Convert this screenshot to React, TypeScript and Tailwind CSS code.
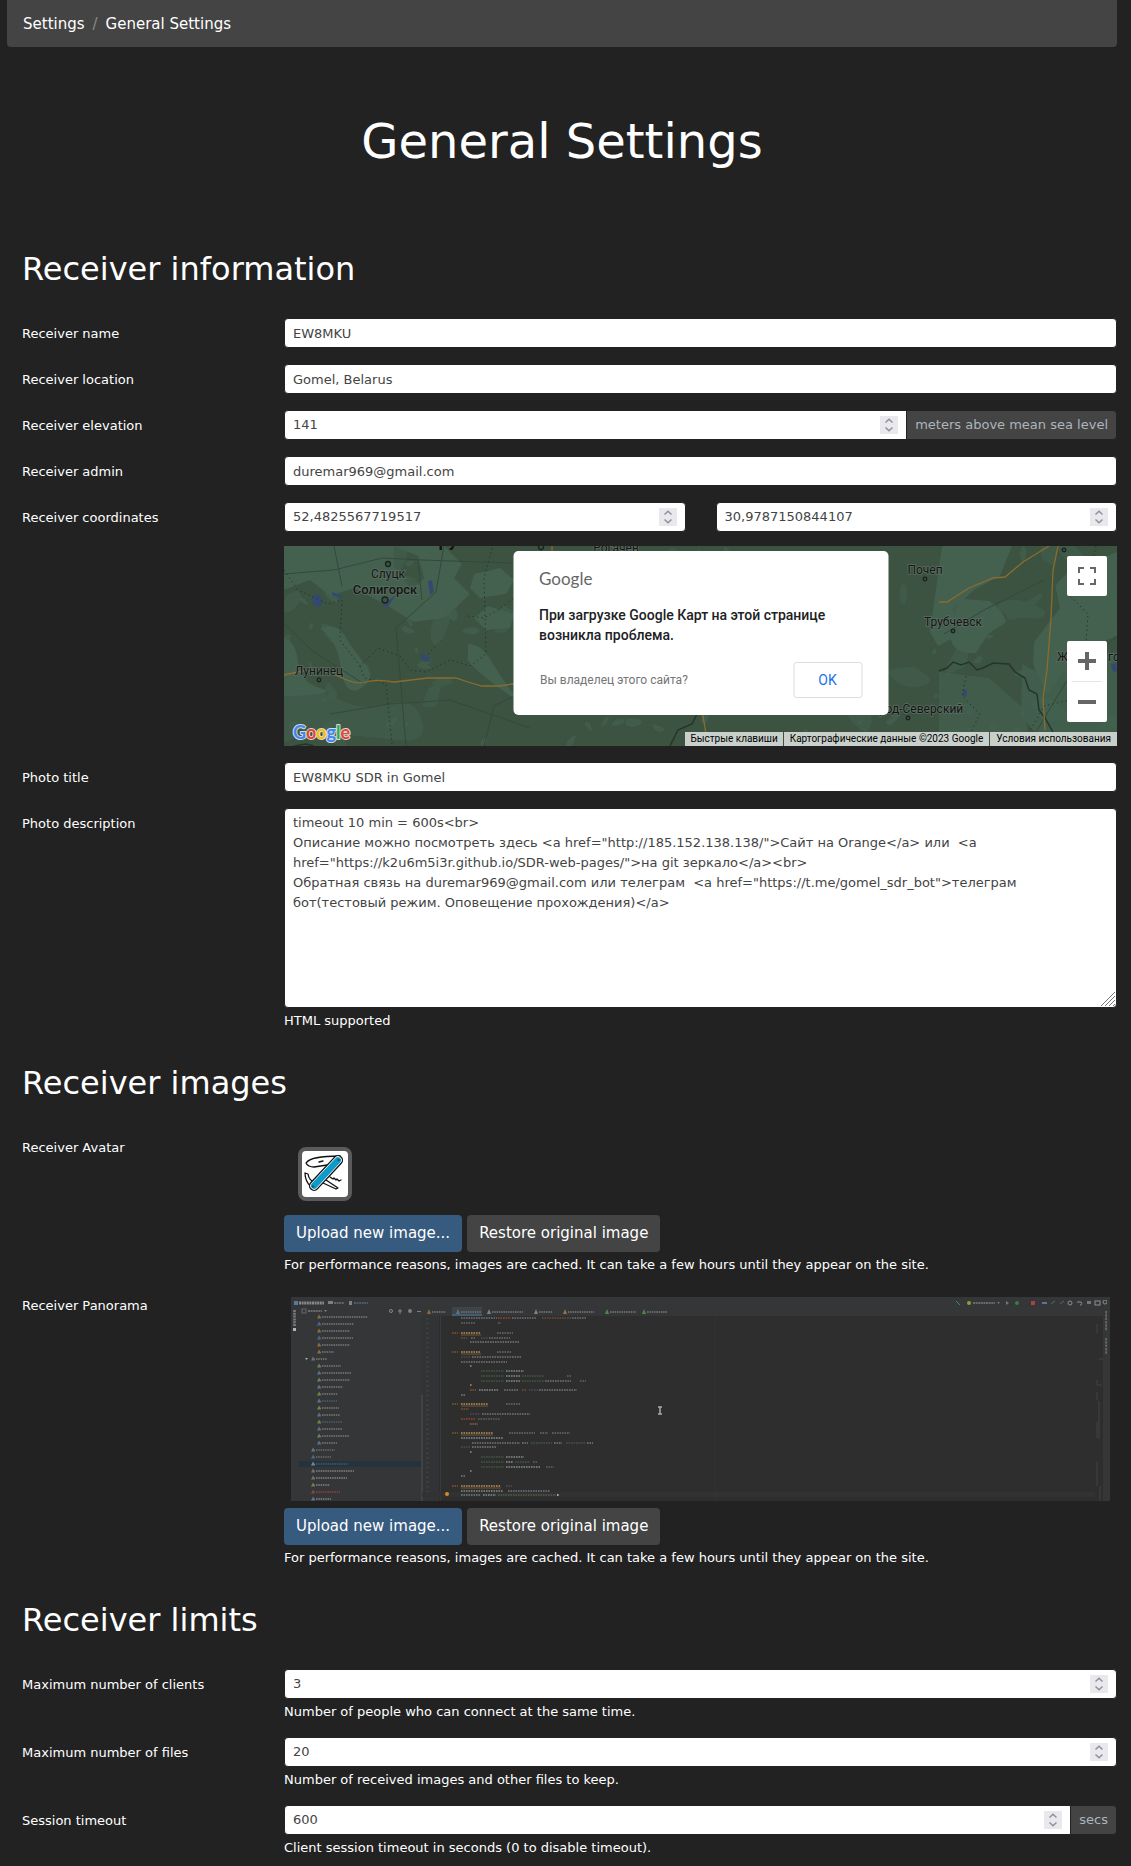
import React from "react";

function seeded(seed: number) {
  let s = seed;
  return () => {
    s = (s * 16807) % 2147483647;
    return s / 2147483647;
  };
}

function blobs(seed: number, count: number, min: number, max: number) {
  const r = seeded(seed);
  return Array.from({ length: count }, () => {
    const cx = r() * 833;
    const cy = r() * 200;
    const size = min + r() * (max - min);
    const tilt = r() * Math.PI;
    const points = Array.from({ length: 9 }, (_, i) => {
      const a = (i / 9) * Math.PI * 2;
      const px = Math.cos(a) * size * (0.6 + r() * 0.7);
      const py = Math.sin(a) * size * (0.25 + r() * 0.4);
      return [
        cx + px * Math.cos(tilt) - py * Math.sin(tilt),
        cy + px * Math.sin(tilt) + py * Math.cos(tilt),
      ];
    });
    const mid = (a: number[], b: number[]) => `${(a[0] + b[0]) / 2} ${(a[1] + b[1]) / 2}`;
    return (
      `M${mid(points[8], points[0])}` +
      points.map((p, i) => `Q${p[0]} ${p[1]} ${mid(p, points[(i + 1) % 9])}`).join("") +
      "Z"
    );
  }).join("");
}

const smallFields = blobs(77, 105, 3, 10);
const fields = blobs(19, 42, 9, 22);

function Label({ htmlFor, children }: { htmlFor?: string; children: React.ReactNode }) {
  return (
    <label htmlFor={htmlFor} className="pt-[6px] text-[13px] leading-5">
      {children}
    </label>
  );
}

function Row({ id, label, children }: { id: string; label: string; children: React.ReactNode }) {
  return (
    <div className="mb-4 grid grid-cols-[262px_minmax(0,1fr)]">
      <Label htmlFor={id}>{label}</Label>
      <div className="min-w-0">{children}</div>
    </div>
  );
}

function Help({ children }: { children: React.ReactNode }) {
  return <p className="mt-1 text-[13px] leading-[18px]">{children}</p>;
}

function TextField({ id, value }: { id: string; value: string }) {
  return (
    <input
      id={id}
      type="text"
      defaultValue={value}
      className="block h-[30px] w-full rounded-[4px] border border-[#222] bg-white px-2 text-[13px] text-[#444] outline-none"
    />
  );
}

function NumberField({ id, value, unit, label }: { id: string; value: string; unit?: string; label?: string }) {
  return (
    <div className="flex h-[30px]">
      <div
        className={
          unit
            ? "flex min-w-0 flex-1 items-center rounded-l-[4px] border border-[#222] bg-white pr-2"
            : "flex min-w-0 flex-1 items-center rounded-[4px] border border-[#222] bg-white pr-2"
        }
      >
        <input
          id={id}
          type="text"
          inputMode="decimal"
          aria-label={label}
          defaultValue={value}
          className="min-w-0 flex-1 bg-transparent px-2 text-[13px] text-[#444] outline-none"
        />
        <svg viewBox="0 0 18 18" className="h-[18px] w-[18px] shrink-0 bg-[#e9e9ed]" aria-hidden="true">
          <path d="M5.5 6.500 9 3.300l3.500 3.200M5.500 11.500 9 14.700l3.500-3.200" fill="none" stroke="#8f8f9d" strokeWidth="1.500" />
        </svg>
      </div>
      {unit && (
        <span className="-ml-px flex items-center rounded-r-[4px] border border-[#222] bg-[#444] px-2 text-[13px] text-[#adb5bd]">
          {unit}
        </span>
      )}
    </div>
  );
}

function GoogleColor() {
  return (
    <svg viewBox="0 0 66 24" className="absolute bottom-0 left-2 h-6 w-[66px]" role="img" aria-label="Google">
      <text
        x="1"
        y="17"
        fontFamily="Lato, sans-serif"
        fontSize="18"
        fontWeight="700"
        stroke="#d5dcd7"
        strokeWidth="2"
        strokeLinejoin="round"
        paintOrder="stroke"
      >
        <tspan fill="#4285f4">G</tspan>
        <tspan fill="#ea4335">o</tspan>
        <tspan fill="#fbbc04">o</tspan>
        <tspan fill="#4285f4">g</tspan>
        <tspan fill="#34a853">l</tspan>
        <tspan fill="#ea4335">e</tspan>
      </text>
    </svg>
  );
}

function MapDrawing() {
  return (
    <svg viewBox="0 0 833 200" preserveAspectRatio="xMidYMid slice" className="block h-full w-full" aria-label="Map">
      <rect width="833" height="200" fill="#3b5340" />
      <g fill="#446150">
        <path d="M0 0H160L178 18 170 32 186 48 160 72 130 76 104 60 70 42 46 50 26 34 0 44Z" />
        <path d="M35 82q18-6 26 8t20 28-4 24-20-20-22-40Z" />
        <path d="M0 92q12 4 14 24T36 142 12 150 0 134Z" />
        <path d="M0 150q26-12 52 2t52 6 34 16-26 20-62-6-50 8Z" opacity=".55" />
        <path d="M184 98q14 0 24 18t22 32-20-10-26-28Z" />
        <path d="M190 28l26-6 14 12-8 14-26 4-10-10ZM204 60l26 8-4 14-24 2-12-12Z" />
        <path d="M658 0h70l-12 30-26 14-22 20 12 22-26 14-8-14Z" />
        <path d="M705 55q18 10 18 30t-30 22-26-24 14-30Z" />
        <path d="M752 60l32-34 49-20v84l-36 14-34 44-14-30Z" />
        <path d="M655 126l50 6 34 30 8 38H655Z" opacity=".7" />
        <path d="M738 118q20 14 44 4t51-16v94h-70l-26-30Z" opacity=".75" />
      </g>
      <g fill="#3b5340">
        <path d="M742 10l26 14 8 38-26 34-42 22-28 8 24-38 28-18 2-26Z" />
        <path d="M0 52l20 6 20 18-10 20-30-6ZM110 0l24 10 6 22-12 12-18-24Z" />
      </g>
      <g fill="#446150">
        <path d={fields} opacity=".5" />
        <path d={smallFields} opacity=".7" />
      </g>
      <g fill="#34496f">
        <path d="M28 50l7-2 4 8-4 5-6-3ZM136 108l6 1 6 7-7-1-5-4ZM144 35l4-1 2 12-4 3ZM100 58l12-9-8 12h-5ZM48 46l12 4-3 2-9-3Z" />
        <path d="M827 118l5-1 1 8-4 1ZM679 143l4 1-1 7-3-1Z" />
      </g>
      <g fill="none" stroke="#34493b" strokeWidth="1">
        <path d="M0 28l50-4 48-12 40 2 90 3M50 0l8 40M134 14l4 40M160 0l-8 46-40 36 10 118M0 78l30 28 50 32M46 168l60-10 60-4 80 28M200 200l10-40 40-20M660 88l40-24 60-30" />
        <path d="M752 186l30-50 51-46" />
      </g>
      <g fill="none" stroke="#26372c" strokeWidth="1" strokeDasharray="1.500 3">
        <path d="M0 24l14 20 30 14 14-4-2 40 20 26 18-18 22 8 10 14 16 2 24-12 20 6 16-12-2-76 10-36M76 120l4 12 22 6 6 60M184 70l16 2 14-8 16-12M144 108l14-14" />
        <path d="M812 0l-6 26-20 24 18 18-2 28-12 24-4 34-26 6-16 28M682 130l-4 20 18 18-10 20" />
      </g>
      <path
        d="M655 125l8-3 6-6 8 3 8-3 8 8 6-2 10-5 16 1 6 8 10 6 4 12 8 4 2 16 6 8 8 14M10 200l12-2 8 2M386 200l8-16 14-6 6-12"
        fill="none"
        stroke="#26352c"
        strokeWidth="1.500"
      />
      <g fill="none" stroke="#8c6c2e" strokeWidth="1.300">
        <path d="M0 129l18-4q22-2 38 6t26 5 28 0l34-4h28l12 4 14 4h18l12-2h30" />
        <path d="M268 0v8M418 164l6 36M655 56h8l22-14 24-10 12-1 18-15 26-16M774 0l-5 24-2 48-4 52-4 28 2 32" />
      </g>
      <g fill="#3b5340" stroke="#1b211d" strokeWidth="1.300">
        <circle cx="104" cy="18" r="2.500" />
        <circle cx="101" cy="54" r="3" />
        <circle cx="35" cy="134" r="1.800" />
        <circle cx="257" cy="1" r="2.500" />
        <circle cx="641" cy="33" r="1.800" />
        <circle cx="669" cy="85" r="1.800" />
        <circle cx="624" cy="172" r="1.800" />
        <circle cx="780" cy="4" r="1.800" />
      </g>
      <g
        fontFamily="Roboto, sans-serif"
        fontSize="12"
        fill="#121512"
        stroke="#5d6e63"
        strokeWidth="1.500"
        paintOrder="stroke"
        textAnchor="middle"
      >
        <text x="104" y="32">Слуцк</text>
        <text x="101" y="48" fontWeight="500" fontSize="13">Солигорск</text>
        <text x="35" y="129">Лунинец</text>
        <text x="332" y="6">Рогачев</text>
        <text x="164" y="0" fontWeight="700" fontSize="18" stroke="none">ру</text>
        <text x="641" y="28">Почеп</text>
        <text x="669" y="80">Трубчевск</text>
        <text x="620" y="167">Новгород-Северский</text>
        <text x="773" y="115" textAnchor="start">Ж</text>
        <text x="824" y="115" textAnchor="start">го</text>
      </g>
    </svg>
  );
}

function ReceiverMap() {
  return (
    <div className="relative mt-[14px] h-[200px] overflow-hidden font-[Roboto,sans-serif]">
      <MapDrawing />
      <GoogleColor />
      <div className="absolute right-0 bottom-0 flex h-[14px] text-[10px] leading-[14px] text-black">
        <button type="button" className="bg-[#c9d0cb] px-[5px]">Быстрые клавиши</button>
        <span className="border-l border-[#3b5340] bg-[#c9d0cb] px-[6px]">Картографические данные ©2023 Google</span>
        <a href="#terms" className="border-l border-[#3b5340] bg-[#c9d0cb] px-[6px]">Условия использования</a>
      </div>
      <button
        type="button"
        aria-label="Fullscreen"
        className="absolute top-[10px] right-[10px] flex h-10 w-10 items-center justify-center rounded-[2px] bg-white"
      >
        <svg viewBox="0 0 18 18" className="h-[18px] w-[18px]" fill="#666">
          <path d="M0 0v6h2V2h4V0H0zm16 0h-4v2h4v4h2V0h-2zm0 16h-4v2h6v-6h-2v4zM2 12H0v6h6v-2H2v-4z" />
        </svg>
      </button>
      <div className="absolute right-[10px] bottom-6 flex w-10 flex-col items-center rounded-[2px] bg-white">
        <button type="button" aria-label="Zoom in" className="flex h-10 w-10 items-center justify-center">
          <svg viewBox="0 0 18 18" className="h-[18px] w-[18px]" fill="#666">
            <path d="M18 7h-7V0H7v7H0v4h7v7h4v-7h7z" />
          </svg>
        </button>
        <div className="h-px w-[30px] bg-[#e6e6e6]" />
        <button type="button" aria-label="Zoom out" className="flex h-10 w-10 items-center justify-center">
          <svg viewBox="0 0 18 18" className="h-[18px] w-[18px]" fill="#666">
            <path d="M0 7h18v4H0z" />
          </svg>
        </button>
      </div>
      <div
        role="dialog"
        aria-label="Google"
        className="absolute top-[5px] left-1/2 h-[164px] w-[375px] -translate-x-1/2 rounded-[5px] bg-white px-[26px] pt-4"
      >
        <p className="font-[Lato,sans-serif] text-[17px] leading-6 text-[#666]">Google</p>
        <p className="mt-[14px] text-[14px] leading-5 font-medium text-[#202124]">
          При загрузке Google Карт на этой странице возникла проблема.
        </p>
        <div className="mt-[17px] flex items-center justify-between">
          <a href="#owner" className="pl-px text-[12px] text-[#757575]">Вы владелец этого сайта?</a>
          <button type="button" className="h-9 w-[69px] rounded-[3px] border border-[#dadce0] text-[14px] text-[#1a73e8]">
            OK
          </button>
        </div>
      </div>
    </div>
  );
}

function Avatar() {
  return (
    <svg viewBox="0 0 46 46" className="block h-[54px] w-[54px] rounded-[8px] border-4 border-[#5b5b5b] bg-white" role="img" aria-label="Receiver avatar">
      <g fill="#fff" stroke="#111" strokeWidth="1.300" strokeLinejoin="round" strokeLinecap="round">
        <path d="M38 5C28 5 8 6 4 12q2 4 8 4l20-3Z" />
        <path d="M17 11l4-1" />
        <path d="M9 36Q3 30 3 22l3 1q1 7 7 8" />
        <path d="M24 29l12 8-2 1-13-6M28 26l3 2 1-1 2 2 1-1 2 2 2-1" />
        <rect x="-4.500" y="-22" width="9" height="44" rx="4.500" transform="translate(24 22) rotate(43)" />
      </g>
      <rect x="-3.200" y="-20.500" width="6.400" height="41" rx="3.200" transform="translate(24 22) rotate(43)" fill="#0d9bc9" />
      <circle cx="36.500" cy="9" r="1.200" fill="#12556f" />
      <circle cx="11" cy="35.500" r="1.200" fill="#12556f" />
    </svg>
  );
}

/* Sidebar tree entries: indent, y, width, icon colour, text colour */
const tree: [number, number, number, string, string][] = [
  [26, 20, 46, "#8a6d3b", "#666869"],
  [26, 27, 32, "#45698c", "#666869"],
  [26, 34, 28, "#8a6d3b", "#666869"],
  [26, 41, 31, "#45698c", "#666869"],
  [26, 48, 28, "#8a6d3b", "#666869"],
  [26, 55, 12, "#8a6d3b", "#666869"],
  [20, 62, 11, "#6c7173", "#666869"],
  [26, 69, 19, "#75804a", "#666869"],
  [26, 76, 29, "#5b7286", "#666869"],
  [26, 83, 28, "#75804a", "#666869"],
  [26, 90, 21, "#5b7286", "#666869"],
  [26, 97, 16, "#75804a", "#666869"],
  [26, 104, 15, "#5b7286", "#45525c"],
  [26, 111, 17, "#75804a", "#666869"],
  [26, 118, 18, "#5b7286", "#666869"],
  [26, 125, 20, "#75804a", "#45525c"],
  [26, 132, 20, "#5b7286", "#666869"],
  [26, 139, 27, "#75804a", "#666869"],
  [26, 146, 15, "#5b7286", "#666869"],
  [20, 153, 19, "#6c7173", "#5a5d5f"],
  [20, 160, 15, "#45698c", "#5a5d5f"],
  [20, 167, 32, "#7c8489", "#35516b"],
  [20, 174, 38, "#6c7173", "#6d7072"],
  [20, 181, 31, "#6c7173", "#6d7072"],
  [20, 188, 14, "#75804a", "#6d7072"],
  [20, 195, 24, "#8c4440", "#7a3e3b"],
  [20, 202, 15, "#5b7286", "#6d7072"],
];

/* Code runs: x, y, width, colour */
const code: [number, number, number, string][] = [
  [170, 21, 36, "#5f6163"], [207, 21, 13, "#7b3d36"], [221, 21, 25, "#5f6163"], [251, 21, 29, "#5c4537"], [281, 21, 14, "#5f6163"],
  [170, 26, 14, "#57595a"], [207, 26, 3, "#57595a"],
  [161, 36, 6, "#6e4d2d"], [170, 36, 20, "#97754a"], [206, 36, 16, "#595b5d"],
  [170, 41, 6, "#5b4634"], [180, 41, 4, "#595b5d"], [190, 41, 7, "#493f4c"], [198, 41, 21, "#595b5d"],
  [179, 45, 49, "#626466"],
  [161, 55, 6, "#6e4d2d"], [170, 55, 20, "#97754a"], [206, 55, 14, "#595b5d"],
  [170, 60, 9, "#493f4c"], [181, 60, 49, "#606264"],
  [170, 65, 46, "#606264"], [179, 69, 2, "#777"],
  [190, 74, 23, "#3e4c3c"], [215, 74, 18, "#707274"],
  [190, 79, 23, "#3e4c3c"], [215, 79, 15, "#707274"], [231, 79, 22, "#3e4c3c"], [276, 79, 4, "#555"],
  [190, 84, 23, "#3e4c3c"], [215, 84, 15, "#707274"], [231, 84, 22, "#3e4c3c"], [254, 84, 26, "#606264"], [289, 84, 6, "#555"],
  [179, 88, 2, "#777"], [179, 93, 6, "#6e4d2d"], [188, 93, 20, "#707274"], [213, 93, 14, "#606264"], [231, 93, 5, "#5b4634"], [238, 93, 9, "#493f4c"], [248, 93, 38, "#626466"],
  [170, 98, 4, "#666"],
  [161, 107, 6, "#6e4d2d"], [170, 107, 27, "#97754a"], [215, 107, 14, "#595b5d"],
  [170, 112, 8, "#6b492f"], [179, 117, 10, "#493f4c"], [191, 117, 48, "#606264"],
  [170, 122, 14, "#7b3d2e"], [187, 122, 22, "#505256"], [179, 127, 8, "#7e5635"],
  [161, 136, 6, "#6e4d2d"], [170, 136, 32, "#97754a"], [218, 136, 26, "#595b5d"], [249, 136, 8, "#595b5d"], [261, 136, 18, "#595b5d"],
  [170, 141, 42, "#707274"], [181, 146, 48, "#606264"], [231, 146, 6, "#666"], [240, 146, 21, "#3e4c3c"], [263, 146, 8, "#666"], [275, 146, 20, "#3e4c3c"], [296, 146, 6, "#666"],
  [170, 150, 9, "#493f4c"], [181, 150, 24, "#666"], [179, 155, 2, "#777"],
  [190, 160, 23, "#3e4c3c"], [215, 160, 18, "#707274"],
  [190, 165, 23, "#3e4c3c"], [215, 165, 7, "#777"], [224, 165, 15, "#3e4c3c"], [242, 165, 4, "#555"],
  [190, 170, 23, "#3e4c3c"], [215, 170, 34, "#707274"], [255, 170, 8, "#555"],
  [179, 174, 2, "#777"], [170, 179, 4, "#666"],
  [161, 189, 6, "#6e4d2d"], [170, 189, 40, "#97754a"], [215, 189, 6, "#4d414f"],
  [170, 194, 42, "#707274"], [217, 194, 42, "#606264"],
  [170, 198, 20, "#656769"], [192, 198, 13, "#707274"], [207, 198, 58, "#465343"], [266, 198, 2, "#aaa"],
];

const editorTabs: [number, number, string][] = [
  [136, 14, "#8a6d3b"], [165, 20, "#5b7286"], [196, 31, "#7c8489"], [243, 14, "#7c8489"], [272, 26, "#a06c37"], [314, 26, "#4d8b45"], [351, 20, "#4d8b45"],
];

function Panorama() {
  return (
    <svg
      viewBox="0 0 819 204"
      preserveAspectRatio="xMinYMin slice"
      className="block h-[204px] w-full"
      role="img"
      aria-label="Receiver panorama"
    >
      <defs>
        <filter id="soft" x="0" y="0" width="100%" height="100%">
          <feGaussianBlur stdDeviation="0.500" />
        </filter>
      </defs>
      <rect width="819" height="204" fill="#2e2e2e" />
      <path d="M0 0h819v204h-7V19H131v185H0Z" fill="#343638" />
      <rect x="131" y="19" width="17" height="185" fill="#313335" />
      <rect x="149" y="19" width="1" height="185" fill="#383a3c" />
      <rect x="130" y="98" width="2" height="106" fill="#414345" />
      <rect x="8" y="164" width="122" height="6" fill="#25333f" />
      <rect x="161" y="10" width="30" height="9" fill="#3d444a" />
      <rect x="161" y="17" width="30" height="2" fill="#40606f" />
      <rect x="424" y="19" width="1" height="185" fill="#323232" />
      <rect x="131" y="195" width="673" height="5" fill="#323232" />
      <g filter="url(#soft)">
        <g fill="#7b8083">
          <rect x="3" y="4" width="4" height="4" fill="#56789a" />
          <path d="M8 6h25" stroke="#858a8d" strokeWidth="3" strokeDasharray="2 0.600" />
          <rect x="37" y="4" width="5" height="3" />
          <path d="M43 6h10" stroke="#626567" strokeWidth="2" strokeDasharray="2 0.600" />
          <rect x="58" y="4" width="3" height="4" />
          <path d="M63 6h14" stroke="#435c75" strokeWidth="2" strokeDasharray="2 0.600" />
          <rect x="11" y="12" width="4" height="4" fill="none" stroke="#666a6c" />
          <path d="M17 14h14" stroke="#666a6c" strokeWidth="2" strokeDasharray="2 0.600" />
          <path d="m33 13 3 0-1.500 2Z" />
          <circle cx="100" cy="14" r="1.500" fill="none" stroke="#85898b" />
          <path d="M109 12v5M107 14h4" stroke="#85898b" />
          <circle cx="119" cy="14" r="2" />
          <rect x="126" y="14" width="4" height="1" />
          <path d="M3.500 13v16" stroke="#7b8083" strokeWidth="2.500" strokeDasharray="2 0.800" />
          <rect x="2" y="31" width="3" height="3" fill="#b2b5b7" />
        </g>
        {editorTabs.map(([x, w, c]) => (
          <g key={x}>
            <path d={`M${x} 17l2-5 2 5Z`} fill={c} />
            <path d={`M${x + 5} 15h${w}`} stroke="#66696b" strokeWidth="2" strokeDasharray="1.500 0.800" />
          </g>
        ))}
        {tree.map(([x, y, w, icon, ink]) => (
          <g key={y}>
            <path d={`M${x} ${y + 1.5}l2-4 2 3v1Z`} fill={icon} />
            <path d={`M${x + 5} ${y}h${w}`} stroke={ink} strokeWidth="2.200" strokeDasharray="1.500 0.800" />
          </g>
        ))}
        <path d="m14 61 3 0-1.500 2Z" fill="#aaa" />
        {Array.from({ length: 37 }, (_, i) => (
          <rect key={i} x="135" y={21 + i * 4.8} width="3" height="1.500" fill="#3d4143" />
        ))}
        {code.map(([x, y, w, c], i) => (
          <path key={i} d={`M${x} ${y}h${w}`} stroke={c} strokeWidth="2" strokeDasharray="1.600 0.900" />
        ))}
        <path d="M170 38h20M170 57h20M170 109h27M170 138h32M170 191h40" stroke="#6e5736" strokeWidth="1" />
        <circle cx="156" cy="197" r="2" fill="#d08c2c" />
        <path d="M367 110h4M369 110v7M367 117h4" stroke="#aaa" strokeWidth="1.500" />
        <g fill="#737779">
          <path d="m665 4 4 4" stroke="#4b8b55" />
          <circle cx="678" cy="6" r="2" fill="#9a983c" />
          <path d="M682 6h22" stroke="#666a6c" strokeWidth="2" strokeDasharray="2 0.600" />
          <path d="m706 5 3 0-1.500 2ZM715 4l3 2-3 2Z" />
          <circle cx="726" cy="6" r="2" fill="#397d43" />
          <rect x="740" y="4" width="4" height="4" fill="#a84343" />
          <rect x="751" y="5" width="5" height="2" fill="#56789a" />
          <path d="m760 7 4-3M769 7l4-3" stroke="#4d7350" />
          <circle cx="779" cy="6" r="2" fill="none" stroke="#8b8e90" />
          <path d="M786 5h4q2 3-1 3" fill="none" stroke="#8b8e90" />
          <rect x="796" y="4" width="4" height="3" />
          <rect x="804" y="4" width="5" height="4" fill="none" stroke="#8b8e90" />
          <circle cx="814" cy="5" r="2" fill="none" stroke="#8b8e90" />
          <path d="M815.500 14v20M815.500 41v16" stroke="#66696b" strokeWidth="2.500" strokeDasharray="2.500 0.800" />
        </g>
        <path d="M806 27v9M808 62h4M806 83v5h5M806 95v8M808 104v38M806 125v16M806 165v24M809 189v15" stroke="#414345" fill="none" strokeWidth="1" />
      </g>
    </svg>
  );
}

function ImageActions() {
  return (
    <div className="flex gap-[5px] text-[15px]">
      <button type="button" className="h-[37px] rounded-[4px] bg-[#375a7f] px-3 text-white">
        Upload new image...
      </button>
      <button type="button" className="h-[37px] rounded-[4px] bg-[#444] px-3 text-white">
        Restore original image
      </button>
    </div>
  );
}

function SectionTitle({ children }: { children: React.ReactNode }) {
  return <h2 className="mb-[30px] text-[32px] leading-[38px]">{children}</h2>;
}

const description = `timeout 10 min = 600s<br>
Описание можно посмотреть здесь <a href="http://185.152.138.138/">Сайт на Orange</a> или  <a href="https://k2u6m5i3r.github.io/SDR-web-pages/">на git зеркало</a><br>
Обратная связь на duremar969@gmail.com или телеграм  <a href="https://t.me/gomel_sdr_bot">телеграм бот(тестовый режим. Оповещение прохождения)</a>`;

const cacheNote = "For performance reasons, images are cached. It can take a few hours until they appear on the site.";

export default function App() {
  return (
    <div className="min-h-screen bg-[#222] pr-[14px] pl-[7px] font-['DejaVu_Sans',Verdana,sans-serif] text-[15px] text-white">
      <nav aria-label="Breadcrumb" className="h-[47px] rounded-b-[4px] bg-[#444] px-4 pt-[2px]">
        <ol className="flex h-full items-center gap-2">
          <li><a href="#settings">Settings</a></li>
          <li className="text-[#888]" aria-hidden="true">/</li>
          <li aria-current="page">General Settings</li>
        </ol>
      </nav>
      <h1 className="mt-[65px] mb-20 text-center text-[48px] leading-[58px]">General Settings</h1>
      <form className="pl-[15px]">
        <section>
          <SectionTitle>Receiver information</SectionTitle>
          <Row id="name" label="Receiver name"><TextField id="name" value="EW8MKU" /></Row>
          <Row id="location" label="Receiver location"><TextField id="location" value="Gomel, Belarus" /></Row>
          <Row id="elevation" label="Receiver elevation">
            <NumberField id="elevation" value="141" unit="meters above mean sea level" />
          </Row>
          <Row id="admin" label="Receiver admin"><TextField id="admin" value="duremar969@gmail.com" /></Row>
          <Row id="latitude" label="Receiver coordinates">
            <div className="grid grid-cols-2 gap-[30px]">
              <NumberField id="latitude" value="52,4825567719517" />
              <NumberField id="longitude" value="30,9787150844107" label="Longitude" />
            </div>
            <ReceiverMap />
          </Row>
          <Row id="photo-title" label="Photo title"><TextField id="photo-title" value="EW8MKU SDR in Gomel" /></Row>
          <Row id="photo-description" label="Photo description">
            <div className="relative">
              <textarea
                id="photo-description"
                defaultValue={description}
                spellCheck={false}
                className="block h-[200px] w-full resize-none rounded-[4px] border border-[#222] bg-white px-2 py-1 text-[13px] leading-5 text-[#444] outline-none"
              />
              <svg viewBox="0 0 14 14" className="pointer-events-none absolute right-[2px] bottom-[2px] h-[14px] w-[14px]" aria-hidden="true">
                <path d="M0 14 14 0M4 14 14 4M8 14l6-6M12 14l2-2" stroke="#777" strokeWidth="1" />
              </svg>
            </div>
            <Help>HTML supported</Help>
          </Row>
        </section>
        <section className="pt-[18px]">
          <SectionTitle>Receiver images</SectionTitle>
          <div className="mb-4 grid grid-cols-[262px_minmax(0,1fr)]">
            <p className="pt-[6px] text-[13px] leading-5">Receiver Avatar</p>
            <div className="min-w-0">
              <div className="px-[14px] pt-[15px] pb-[14px]"><Avatar /></div>
              <ImageActions />
              <Help>{cacheNote}</Help>
            </div>
          </div>
          <div className="mb-4 grid grid-cols-[262px_minmax(0,1fr)]">
            <p className="pt-[6px] text-[13px] leading-5">Receiver Panorama</p>
            <div className="min-w-0">
              <div className="p-[7px]"><Panorama /></div>
              <ImageActions />
              <Help>{cacheNote}</Help>
            </div>
          </div>
        </section>
        <section className="pt-[18px]">
          <SectionTitle>Receiver limits</SectionTitle>
          <Row id="clients" label="Maximum number of clients">
            <NumberField id="clients" value="3" />
            <Help>Number of people who can connect at the same time.</Help>
          </Row>
          <Row id="files" label="Maximum number of files">
            <NumberField id="files" value="20" />
            <Help>Number of received images and other files to keep.</Help>
          </Row>
          <Row id="timeout" label="Session timeout">
            <NumberField id="timeout" value="600" unit="secs" />
            <Help>Client session timeout in seconds (0 to disable timeout).</Help>
          </Row>
        </section>
      </form>
    </div>
  );
}
